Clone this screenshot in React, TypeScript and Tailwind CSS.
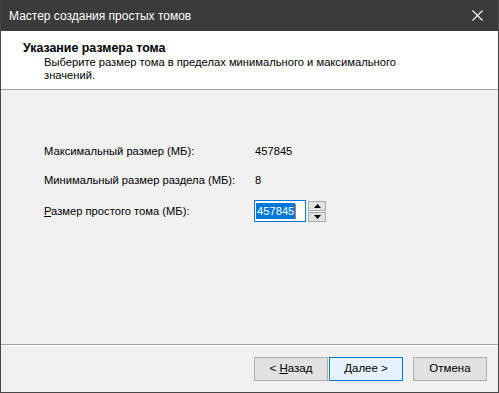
import React from "react";

const font = { fontFamily: '"Liberation Sans", Arial, sans-serif' };

const WizardPage = () => {
  return (
    <div
      className="w-[499px] h-[393px] flex flex-col bg-[#f0f0f0] border-x border-b border-[#474747] text-[11px] text-black overflow-hidden"
      style={font}
    >
      {/* Title bar */}
      <div className="h-[31px] shrink-0 bg-[#3b3b3b] flex items-center justify-between pl-[8px] pr-[15px] text-white">
        <span className="text-[12px] leading-none">Мастер создания простых томов</span>
        <svg width="11" height="11" viewBox="0 0 11 11">
          <path d="M0.5 0.5 L10.5 10.5 M10.5 0.5 L0.5 10.5" stroke="#fff" strokeWidth="1.1" />
        </svg>
      </div>

      {/* Header */}
      <div className="h-[59px] shrink-0 bg-white border-b border-[#a0a0a0] pl-[22px] pt-[10px]">
        <div className="font-bold text-[12.4px] leading-[15px]">Указание размера тома</div>
        <div className="pl-[21px] leading-[13px] text-[11.2px]">
          Выберите размер тома в пределах минимального и максимального
          <br />
          значений.
        </div>
      </div>

      {/* Content */}
      <div className="flex-1 pl-[43px] pt-[54px] border-b border-[#a0a0a0] shadow-[0_1px_0_#ffffff] text-[11.2px]">
        <div className="flex items-center h-[14px]">
          <span className="w-[211px]">Максимальный размер (МБ):</span>
          <span>457845</span>
        </div>
        <div className="flex items-center h-[14px] mt-[15px]">
          <span className="w-[211px]">Минимальный размер раздела (МБ):</span>
          <span>8</span>
        </div>
        <div className="flex items-center mt-[13px]">
          <span className="w-[210px]">
            <span className="underline">Р</span>азмер простого тома (МБ):
          </span>
          <div className="w-[52px] h-[22px] border border-[#0078d7] bg-white flex items-center pl-[1px]">
            <span className="bg-[#0078d7] text-white text-[11.2px] leading-[16px] px-[1px]">457845</span>
            <span className="w-[1px] h-[15px] bg-[#e07a2a]" />
          </div>
          <div className="ml-[2px] flex flex-col gap-[1px]">
            <div className="w-[18px] h-[10px] border border-[#adadad] bg-[#e1e1e1] flex items-center justify-center">
              <svg width="7" height="4" viewBox="0 0 7 4">
                <path d="M3.5 0 L7 4 L0 4 Z" fill="#000" />
              </svg>
            </div>
            <div className="w-[18px] h-[10px] border border-[#adadad] bg-[#e1e1e1] flex items-center justify-center">
              <svg width="7" height="4" viewBox="0 0 7 4">
                <path d="M0 0 L7 0 L3.5 4 Z" fill="#000" />
              </svg>
            </div>
          </div>
        </div>
      </div>

      {/* Footer buttons */}
      <div className="h-[47px] shrink-0 flex items-start pt-[12px] pl-[253px] text-[11.5px]">
        <button className="w-[74px] h-[24px] border border-[#adadad] bg-[#e1e1e1] leading-none">
          &lt; <span className="underline">Н</span>азад
        </button>
        <button className="ml-[1px] w-[74px] h-[24px] border border-[#0078d7] bg-[#e5f1fb] leading-none">
          <span className="underline">Д</span>алее &gt;
        </button>
        <button className="ml-[10px] w-[74px] h-[24px] border border-[#adadad] bg-[#e1e1e1] leading-none">
          Отмена
        </button>
      </div>
    </div>
  );
};

export default function App() {
  return <WizardPage />;
}
